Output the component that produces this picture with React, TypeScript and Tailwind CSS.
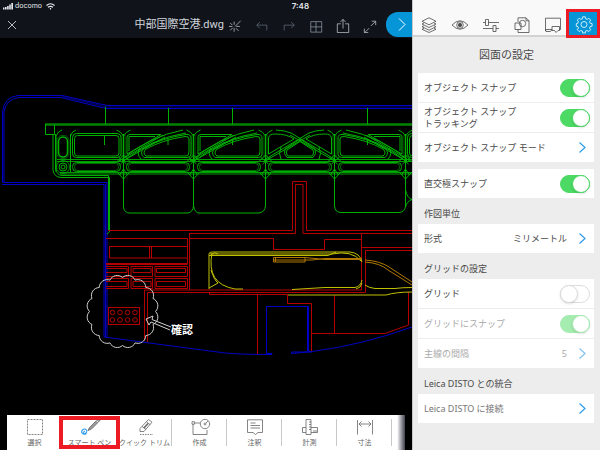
import { useState, type ReactNode } from "react";

function Icon({ size = 16, className = "", children }: { size?: number; className?: string; children: ReactNode }) {
  return (
    <svg
      width={size}
      height={size}
      viewBox="0 0 16 16"
      fill="none"
      stroke="currentColor"
      strokeWidth="0.8"
      className={`shrink-0 ${className}`}
      aria-hidden="true"
    >
      {children}
    </svg>
  );
}

const topActions = [
  {
    name: "Snap",
    tone: "text-gray-300",
    icon: <path d="M8 8.500 14.500 2M7 3v3.500M7 10.500v4M1 8.500h4M9.500 8.500h4M2.500 4.500l2.500 2.500M2.500 13l3-3M9 10.500l3 3" />,
  },
  { name: "Undo", tone: "text-gray-500", icon: <path d="M5.500 3.500 2 7l3.500 3.500M2 7h11.500v6" /> },
  { name: "Redo", tone: "text-gray-500", icon: <path d="M10.500 3.500 14 7l-3.500 3.500M14 7H2.500v6" /> },
  { name: "Layout", tone: "text-gray-400", icon: <path d="M2 3h12.500v12H2zM8 3v12M2 9h12.500" /> },
  { name: "Share", tone: "text-gray-300", icon: <path d="M5.500 5.500h-4v10h13v-10h-4M8 11V.5M5 3.500l3-3 3 3" /> },
  { name: "Full screen", tone: "text-gray-300", icon: <path d="M9 8l5-5M10 2.500h4.500V7M7 10.500 2 15.500M1.500 11v4.500H6" /> },
];

const panelTabs = [
  {
    name: "Layers",
    icon: <path d="M8 .8 15 4.300 8 7.800 1 4.300zM3 6 1 7l7 3.500L15 7l-2-1M3 8.700l-2 1 7 3.500 7-3.500-2-1M3 11.300l-2 1 7 3.200 7-3.200-2-1" />,
  },
  {
    name: "View",
    icon: (
      <>
        <path d="M0 8q8-8.500 16 0-8 8.500-16 0z" />
        <circle cx="8" cy="8" r="3.300" />
        <circle cx="8" cy="8" r="1.700" fill="currentColor" />
      </>
    ),
  },
  { name: "Properties", icon: <path d="M0 5.500h2.500M5.500 5.500H16M2.500 2.500h3v6h-3zM0 11.500h10M13 11.500h3M10 8.500h3v6h-3z" /> },
  {
    name: "Blocks",
    icon: (
      <>
        <path d="M4 5V.8h8l3 3V15.500H4v-3M12 .8v3h3" />
        <path d="M1 6h6v6.500H1z" />
        <circle cx="8.500" cy="6.500" r="3.200" />
      </>
    ),
  },
  { name: "Comments", icon: <path d="M.5 14V1.200h15v11.300H14M7 9.500h7.500v4H13l-2 2-1.500-2H7zM.5 12.500 1 14.500h4.500L7 12.500M.5 12.500H7" /> },
  {
    name: "Settings",
    icon: (
      <>
        <path d="M6.700.8h2.600l.4 2 1.400.6 1.700-1.200 1.900 1.900-1.200 1.700.6 1.400 2 .4v2.600l-2 .4-.6 1.400 1.200 1.700-1.900 1.900-1.700-1.200-1.400.6-.4 2H6.700l-.4-2-1.400-.6-1.700 1.200-1.900-1.900 1.200-1.700-.6-1.400-1.600-.4V7.600l1.600-.4.6-1.400-1.200-1.700 1.900-1.900 1.700 1.200 1.400-.6z" />
        <circle cx="8" cy="8.500" r="3" />
      </>
    ),
  },
];

const tools = [
  { name: "選択", icon: <path d="M.5.500h15v15H.5z" strokeDasharray="2 1" /> },
  {
    name: "スマート ペン",
    active: true,
    icon: (
      <>
        <path d="M7.500 8.500 16 0l2 1.500-8.500 8.500-3.500 1.500z" fill="#9a9a9a" />
        <path d="M14.500 1.500l2 2" stroke="#fff" />
        <path d="M4.500 14.500c-3 2-6.500-1-4-3.500s6 .5 3.500 3-3.500-1-1-2" stroke="#2f9bea" strokeWidth="1.100" />
      </>
    ),
  },
  {
    name: "クイック トリム",
    icon: (
      <>
        <path d="M3 9.500 11.500.5l3.500 2.700L7 12.500H3zM5 7.500l4 3M9.500 2.800l3.800 3" />
        <path d="M7 9l4-4.500" strokeWidth="1.500" />
        <path d="M3 15.500h13" strokeDasharray="1.500 1" />
      </>
    ),
  },
  {
    name: "作成",
    icon: (
      <>
        <path d="M1 5v10.500h14V11M3 4h5M0 2.700h2.500v2.500H0z" />
        <circle cx="13" cy="5" r="4.700" />
        <circle cx="13" cy="5" r="1" />
        <path d="m14 4 2-2" />
      </>
    ),
  },
  { name: "注釈", icon: <path d="M.5.800h15v12.700H11l-2.500 2-2.500-2H.5zM3.500 4h5M3.500 6.500h9.500M3.500 9h9.500" /> },
  { name: "計測", icon: <path d="M4 .5h5v15H4zM4 8.500H.5v5H4M9 8.500h6.500v5H9M7 3h2M7 5.500h2M7 8h2M7 10.500h2M12 11v2.500M14 11v2.500" /> },
  { name: "寸法", icon: <path d="M.5 1v14.500M15.500 1v14.500M2 5h12M4.500 2.500 2 5l2.500 2.500M11.500 2.500 14 5l-2.500 2.500" /> },
];

// revision cloud: a closed ring of small outward arcs
const cloudSteps = 16;
const cloudPath = Array.from({ length: cloudSteps + 1 }, (_, i) => {
  const a = (i / cloudSteps) * Math.PI * 2;
  const x = (122.5 + 33 * Math.cos(a)).toFixed(1);
  const y = (311.5 + 34 * Math.sin(a)).toFixed(1);
  return i === 0 ? `M${x} ${y}` : `A8 8 0 0 1 ${x} ${y}`;
}).join("");

const aprons = [123.5, 193.5, 265.5, 334.5, 405.5];

function CurvedBay() {
  return (
    <>
      <path d="M127 154V137Q127 134.500 130 134.500H161ZM129 151V136.500H155M119 161 163 135M128 158 165 137" />
      <path d="M118 162Q150 136 183 130M122 162Q152 138 186 133" />
      <path d="M144 157.500Q139 153 144 148Q162 138 186 134.500Q191 134 191 138V154Q191 157.500 187 157.500Z" />
      <path d="M146 156Q142 153 146 149Q162 140 185 136.500Q189 136 189 139V152Q189 156 186 156Z" />
      <path d="M141 159Q136 154 140 148" />
    </>
  );
}

function Drawing() {
  return (
    <svg viewBox="0 38 412 377" className="block min-h-0 w-full flex-1" fill="none" strokeWidth="1" role="img" aria-label="中部国際空港">
      <g stroke="#0000c4">
        <path d="M107 182.500H2.500V112Q4 97 18 95.500H62L107 105.500H412" />
        <path d="M104 184.500H2M4 182V112Q6 99 19 97.500H61L106 108.500H412" />
        <path d="M62 96.500 107 107H412" opacity=".6" />
        <path d="M104 184V337M107 182V337M105.500 184V337" />
        <path d="M104 337 225 353Q240 354.500 272 354.500V353.500H266.500V306.500H308.500V351.500" />
        <path d="M307.500 307V351M312 352H291.500V353.500L312 351.500Q362 345 412 327" />
      </g>

      <g stroke="#00b000">
        <path d="M45 124.500H412" strokeWidth="2.500" stroke="#008400" />
        <path d="M45.500 124V134.500H54.500V125M53 134V170Q54 177 61 177.500H109.500V232L107 234" />
        <path d="M55.500 134V169Q57 175 62 175.500H108.500V230" />
        <path d="M105.500 107V124M168.500 108V124M232.500 108V124M367.500 108V124M104.500 135V145M168 139V145M232.500 139V145M367.500 139V145" />
        <path d="M57 159.500H412M57 161.500H412M60 172.500H412M60 174H412" stroke="#009800" />
        <path d="M70.500 134V172M56 172V136Q58 131 62 130M70.500 136Q72 131 76 130" />
        <rect x="58.500" y="137" width="9" height="20" rx="4.500" strokeWidth="1.500" />
        <rect x="57" y="135.500" width="12" height="23" rx="5" opacity=".5" />
        <circle cx="63" cy="167" r="4" />
        <circle cx="63" cy="167" r="2" />
        <circle cx="63" cy="167" r="6.500" opacity=".8" />

        <rect x="72.500" y="133.500" width="48.500" height="24" rx="4" />
        <rect x="74.500" y="135.500" width="44.500" height="20.500" rx="3" />
        <rect x="407.500" y="133.500" width="48.500" height="24" rx="4" />
        <rect x="409.500" y="135.500" width="44.500" height="20.500" rx="3" />
        <CurvedBay />
        <g transform="translate(71 0)">
          <CurvedBay />
        </g>
        <g transform="translate(529 0) scale(-1 1)">
          <CurvedBay />
        </g>

        <path d="M268.500 154V138Q269 134 275 134Q287 134 294 139ZM331.500 154V138Q331 134 325 134Q313 134 306 139Z" />
        <path d="M264 160 309 133Q315 130.500 324 130M336 160 291 133Q285 130.500 276 130M267 160 310 135M333 160 290 135" />
        <path d="M287 157.500Q283 154 285 149L300 139 315 149Q317 154 313 157.500ZM288 156Q285 153 287 150L300 141.500 313 150Q315 153 312 156Z" />
        <path d="M281 159Q278 154 281 147M319 159Q322 154 319 147" />

        {[72.5, 126.5, 197.5, 268.5, 338.5].map((x, i) => (
          <g key={x}>
            <rect x={x} y="162.500" width={i === 0 ? 48 : 63} height="9" rx="4" />
            <rect x={x + 2} y="163.500" width={i === 0 ? 44 : 59} height="7" rx="3" opacity=".6" />
          </g>
        ))}
        {aprons.map((x) => (
          <g key={x} transform={`translate(${x} 0)`}>
            <path d="M0 134V206" />
            <path d="M-1.500 135V158M1.500 135V158" opacity=".5" />
            <path d="M-7 130Q-2 132 0 136Q2 132 7 130M-6 161 0 155 6 161M-5 157 3 164M5 157-3 164M-6 172.500 0 179 6 172.500M-4 175 0 169 4 175" />
          </g>
        ))}
        <path d="M123.500 178V207Q124 213 130 213H188Q193 212 193.500 206Q195 213 199 213H259Q265 212 265.500 206" />
        <path d="M334.500 178V206Q335 212.500 341 212.500H399Q405 212 405.500 206M405.500 190Q407 198 412 199.500Q407 201 405.500 207" />
      </g>

      <g stroke="#b40000">
        <path d="M108 230.500H292.500V181.500H306.500V230.500H412" />
        <path d="M190 233.500H295.500V184.500H303V233.500H412" />
        <path d="M189.500 233V289.500M106 238.500H187.500V263.500H106M106 264.500H187.500" />
        <path d="M190 238.500H273.500V249.500H324.500V239.500H362" />
        <path d="M109.500 246.500H187.500V258H109.500ZM149.500 246V258M151.500 246V258" />
        <path d="M106 266.500H128.500V276.500H106M131 266.500H152.500V276.500H131ZM155 266.500H187.500V276.500H155Z" />
        <path d="M106 268.500H127V272.500H106M133 268.500H151V272.500H133ZM156.500 268.500H185.500V272.500H156.500Z" />
        <path d="M106 278.500H128.500V288.500H106M131 278.500H152.500V288.500H131ZM155 278.500H187.500V288.500H155Z" />
        <path d="M106 281.500H127V286.500H106M133 281.500H151V286.500H133ZM156.500 281.500H185.500V286.500H156.500Z" />
        <path d="M144.500 341V290H361.500V233M147.500 342V292.500H365.500V250.500H412M362 247.500H412" />
        <path d="M209.500 292V294.500H287.500V303.500H311.500V351M257.500 294V354M334.500 295V333" />
        <path d="M311 333.500H385L408.500 325V292" />
        <rect x="108.500" y="307.500" width="31" height="17" />
        {[112.5, 120, 127.5, 135].map((x) => (
          <g key={x}>
            <circle cx={x} cy="312.500" r="2.300" />
            <circle cx={x} cy="320" r="2.300" />
          </g>
        ))}
      </g>

      <g stroke="#c0c000">
        <path d="M209 289V254Q209 252 212 252H350Q360 253 362 262" />
        <path d="M210 254H332Q352 250 361 261M209 255.500H328L336 252" />
        <path d="M212 253Q206 284 235 289H243M210 256Q214 251 218 254M209 288 218 283Q214 280 211 270" />
        <path d="M292 289.500 325 287.500H355Q361 286 362 280M356 289Q361 288 362 283" />
        <path d="M288 295H386Q396 292 412 292M365 285Q369 288 375 288.500H395Q402 287.500 412 287.500" />
      </g>
      <g stroke="#b07800">
        <path d="M273.500 257.500H305V262H273.500ZM275.500 258V262M274 260H312L325 258.500H362M305 257.500 325 259.500H362" />
        <path d="M365 260Q380 261 389 267L412 282M365 262Q380 263 388 270L412 285" />
      </g>

      <g stroke="#d0d0d0">
        <path d={cloudPath} />
        <path d="M171 327 152 319.500 153 316 146 319 149 325 151 322 170 330" />
      </g>
      <text x="171" y="334" fill="#fff" className="font-['Noto_Sans_CJK_JP',sans-serif] text-[11px] font-bold">
        確認
      </text>
    </svg>
  );
}

function Chevron({ muted = false }: { muted?: boolean }) {
  return (
    <svg width="7" height="11" viewBox="0 0 7 11" fill="none" stroke="#2f9bea" strokeWidth="1.200" className={`mr-1 shrink-0 ${muted ? "opacity-60" : ""}`} aria-hidden="true">
      <path d="M.5.500 6 5.500.5 10.500" />
    </svg>
  );
}

const rowClass = "flex min-h-[29px] w-full items-center justify-between bg-white pl-1.5 pr-1 text-left leading-3";

function ToggleRow({ label, initial, disabled = false }: { label: ReactNode; initial: boolean; disabled?: boolean }) {
  const [on, setOn] = useState(initial);
  return (
    <label className={`${rowClass} ${disabled ? "text-[#aaaaaa]" : ""}`}>
      <span>{label}</span>
      <input
        type="checkbox"
        role="switch"
        checked={on}
        disabled={disabled}
        onChange={(e) => setOn(e.target.checked)}
        className="relative h-[18px] w-[30px] shrink-0 appearance-none rounded-full border border-[#dddddd] bg-white before:absolute before:-left-px before:-top-px before:h-[18px] before:w-[18px] before:rounded-full before:border before:border-[#dddddd] before:bg-white before:shadow checked:border-[#4cd964] checked:bg-[#4cd964] checked:before:left-[11px] checked:before:border-[#4cd964] disabled:border-[#a5ecb1] disabled:bg-[#a5ecb1] disabled:before:border-[#a5ecb1]"
      />
    </label>
  );
}

function LinkRow({ label, value, tone = "", muted = false }: { label: string; value?: string; tone?: string; muted?: boolean }) {
  return (
    <button type="button" disabled={muted} className={`${rowClass} ${tone}`}>
      <span>{label}</span>
      <span className="flex items-center gap-3">
        {value}
        <Chevron muted={muted} />
      </span>
    </button>
  );
}

function SectionTitle({ children }: { children: ReactNode }) {
  return <h3 className="flex h-[26px] items-center pl-1.5 pt-1.5">{children}</h3>;
}

export default function App() {
  return (
    <div className="flex h-screen overflow-hidden bg-black font-['Noto_Sans','Noto_Sans_CJK_JP',sans-serif]">
      <main className="flex min-w-0 flex-1 flex-col">
        <header className="h-[38px] shrink-0 bg-[#10141a] text-gray-200">
          <div className="flex h-3 items-center justify-between pl-[3px] pr-[103px]">
            <div className="flex items-center gap-0.5">
              <svg width="10" height="7" viewBox="0 0 10 7" fill="currentColor" aria-hidden="true">
                <path d="M0 4.500h1.500v2H0zM2 4h1.600v2.500H2zM4.100 3h1.600v3.500H4.100zM6.200 1.500h1.600v5H6.200zM8.300 0h1.700v6.500H8.300z" />
              </svg>
              <span className="font-['Inter',sans-serif] text-[7px] leading-3">docomo</span>
              <svg width="9" height="7" viewBox="0 0 9 7" fill="none" stroke="currentColor" strokeWidth="1.200" className="ml-0.5" aria-hidden="true">
                <path d="M.5 2.500q4-3.500 8 0M2 4.300q2.500-2 5 0M4.500 5v1.500" />
              </svg>
            </div>
            <time className="font-['Inter',sans-serif] text-[8px] font-semibold leading-3">7:48</time>
          </div>
          <div className="flex h-[25px] items-center">
            <button type="button" aria-label="Close" className="ml-[7px]">
              <svg width="10" height="10" viewBox="0 0 10 10" fill="none" stroke="currentColor" strokeWidth="0.800">
                <path d="M1 1l8 8M9 1 1 9" />
              </svg>
            </button>
            <h1 className="flex-1 pr-1 text-right font-['Roboto','Noto_Sans_CJK_JP',sans-serif] text-[11px] leading-4 text-gray-300">中部国際空港.dwg</h1>
            <div className="flex gap-[13px] pr-[9px] pt-0.5">
              {topActions.map((a) => (
                <button key={a.name} type="button" aria-label={a.name} className={a.tone}>
                  <Icon size={14}>{a.icon}</Icon>
                </button>
              ))}
            </div>
            <button type="button" aria-label="Hide panel" className="flex h-full w-[26px] items-center justify-center rounded-l-xl bg-[#0696d7] pl-1.5 text-white">
              <svg width="8" height="13" viewBox="0 0 8 13" fill="none" stroke="currentColor">
                <path d="M1 .5 7 6.500 1 12.500" />
              </svg>
            </button>
          </div>
        </header>

        <Drawing />

        <nav className="ml-[7px] mr-[7px] flex h-[35px] shrink-0 bg-white text-[#666666]">
          {tools.map((t) => (
            <button key={t.name} type="button" className="relative flex flex-1 flex-col items-center pt-1">
              <Icon className="overflow-visible">{t.icon}</Icon>
              <span className="mt-[3px] whitespace-nowrap text-[7px] leading-[10px]">{t.name}</span>
              {t.active ? (
                <span className="absolute inset-y-px -left-[3px] -right-[3px] z-10 border-4 border-[#ed1c24]" />
              ) : (
                <span className="absolute bottom-1 right-0 top-1 border-r border-[#c8c8c8]" />
              )}
            </button>
          ))}
          <div className="w-[13px] bg-linear-to-r from-white from-40% to-[#444450]" />
        </nav>
      </main>

      <aside className="flex w-[188px] shrink-0 flex-col border-l border-[#c8c8c8] bg-[#ededed] text-[9px] text-[#4a4a4a]">
        <header className="h-[37px] shrink-0 border-b-2 border-[#d2d2d2] bg-[#f9f9f9]">
          <div className="h-3 pr-5 text-right text-[7px] leading-3 text-white">29%</div>
          <div className="flex h-[23px] items-center">
            {panelTabs.map((t) => (
              <button
                key={t.name}
                type="button"
                aria-label={t.name}
                className={
                  t.name === "Settings"
                    ? "relative flex h-full flex-1 items-center justify-center bg-[#0696d7] text-white"
                    : "flex h-full flex-1 items-center justify-center pt-0.5"
                }
              >
                <Icon className="overflow-visible">{t.icon}</Icon>
                {t.name === "Settings" && <span className="absolute -bottom-[3px] -left-[3px] -top-[3px] right-0 border-[3px] border-[#ed1c24]" />}
              </button>
            ))}
          </div>
        </header>

        <h2 className="flex h-9 shrink-0 items-center justify-center text-[11px]">図面の設定</h2>

        <div className="flex flex-col pl-[5px] pr-1.5">
          <div className="flex flex-col gap-px">
            <ToggleRow label="オブジェクト スナップ" initial />
            <ToggleRow label={<>オブジェクト スナップ<br />トラッキング</>} initial />
            <LinkRow label="オブジェクト スナップ モード" />
          </div>
          <div className="mt-[7px]">
            <ToggleRow label="直交極スナップ" initial />
          </div>
          <SectionTitle>作図単位</SectionTitle>
          <LinkRow label="形式" value="ミリメートル" />
          <SectionTitle>グリッドの設定</SectionTitle>
          <div className="flex flex-col gap-px">
            <ToggleRow label="グリッド" initial={false} />
            <ToggleRow label="グリッドにスナップ" initial disabled />
            <LinkRow label="主線の間隔" value="5" tone="text-[#aaaaaa]" muted />
          </div>
          <SectionTitle>Leica DISTO との統合</SectionTitle>
          <LinkRow label="Leica DISTO に接続" tone="text-[#777777]" />
        </div>
      </aside>
    </div>
  );
}
